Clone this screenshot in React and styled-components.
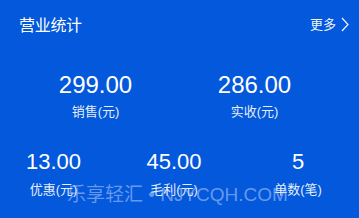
import React from "react";
import styled, { createGlobalStyle } from "styled-components";

const Global = createGlobalStyle`
  html, body { margin: 0; padding: 0; background: #0358db; }
  body { font-family: "Liberation Sans", "Noto Sans CJK SC", sans-serif; }
`;

const Card = styled.div`
  position: relative;
  width: 359px;
  height: 218px;
  background: #0358db;
  color: #fff;
  overflow: hidden;
  box-sizing: border-box;
  padding-top: 13px;
`;

const Header = styled.div`
  display: flex;
  align-items: center;
  justify-content: space-between;
  padding: 0 10px 0 19px;
  height: 22px;
`;

const Title = styled.div`
  font-family: "Noto Sans CJK SC", sans-serif;
  font-size: 16px;
  line-height: 22px;
  letter-spacing: -0.3px;
`;

const More = styled.div`
  display: flex;
  align-items: center;
  gap: 5px;
  font-family: "Noto Sans CJK SC", sans-serif;
  font-size: 13px;
  line-height: 18px;
  color: rgba(255, 255, 255, 0.95);
`;

const StatRow = styled.div`
  display: grid;
  grid-template-columns: ${(p) => p.$cols};
  padding-left: ${(p) => p.$pl}px;
  margin-top: ${(p) => p.$mt}px;
`;

const Stat = styled.div`
  display: flex;
  flex-direction: column;
  align-items: center;
`;

const Value = styled.div`
  font-family: "Liberation Sans", sans-serif;
  font-size: ${(p) => p.$size}px;
  line-height: ${(p) => p.$lh}px;
  white-space: nowrap;
`;

const Label = styled.div`
  font-family: "Liberation Sans", "Noto Sans CJK SC", sans-serif;
  font-size: 13px;
  line-height: 18px;
  margin-top: ${(p) => p.$gap}px;
  color: rgba(255, 255, 255, 0.92);
  white-space: nowrap;
`;

const Watermark = styled.div`
  position: absolute;
  left: 67px;
  top: 184px;
  font-family: "Liberation Sans", "Noto Sans CJK SC", sans-serif;
  font-size: 19px;
  line-height: 22px;
  color: rgba(190, 210, 255, 0.55);
  white-space: nowrap;
  pointer-events: none;
`;

const Chevron = () => (
  <svg width="8" height="15" viewBox="0 0 8 15" fill="none">
    <polyline points="1,1 7,7.5 1,14" stroke="rgba(255,255,255,0.95)" strokeWidth="1.2" fill="none" />
  </svg>
);

const top = [
  { v: "299.00", l: "销售(元)" },
  { v: "286.00", l: "实收(元)" },
];
const bottom = [
  { v: "13.00", l: "优惠(元)" },
  { v: "45.00", l: "毛利(元)" },
  { v: "5", l: "单数(笔)" },
];

export default function App() {
  return (
    <>
      <Global />
      <Card>
        <Header>
          <Title>营业统计</Title>
          <More>
            更多
            <Chevron />
          </More>
        </Header>
        <StatRow $cols="159px 159px" $pl={16} $mt={36}>
          {top.map((s) => (
            <Stat key={s.l}>
              <Value $size={24} $lh={28}>{s.v}</Value>
              <Label $gap={4}>{s.l}</Label>
            </Stat>
          ))}
        </StatRow>
        <StatRow $cols="107px 134px 114px" $pl={0} $mt={28}>
          {bottom.map((s) => (
            <Stat key={s.l}>
              <Value $size={22} $lh={26}>{s.v}</Value>
              <Label $gap={6}>{s.l}</Label>
            </Stat>
          ))}
        </StatRow>
        <Watermark>乐享轻汇 • NJYCQH.COM</Watermark>
      </Card>
    </>
  );
}
